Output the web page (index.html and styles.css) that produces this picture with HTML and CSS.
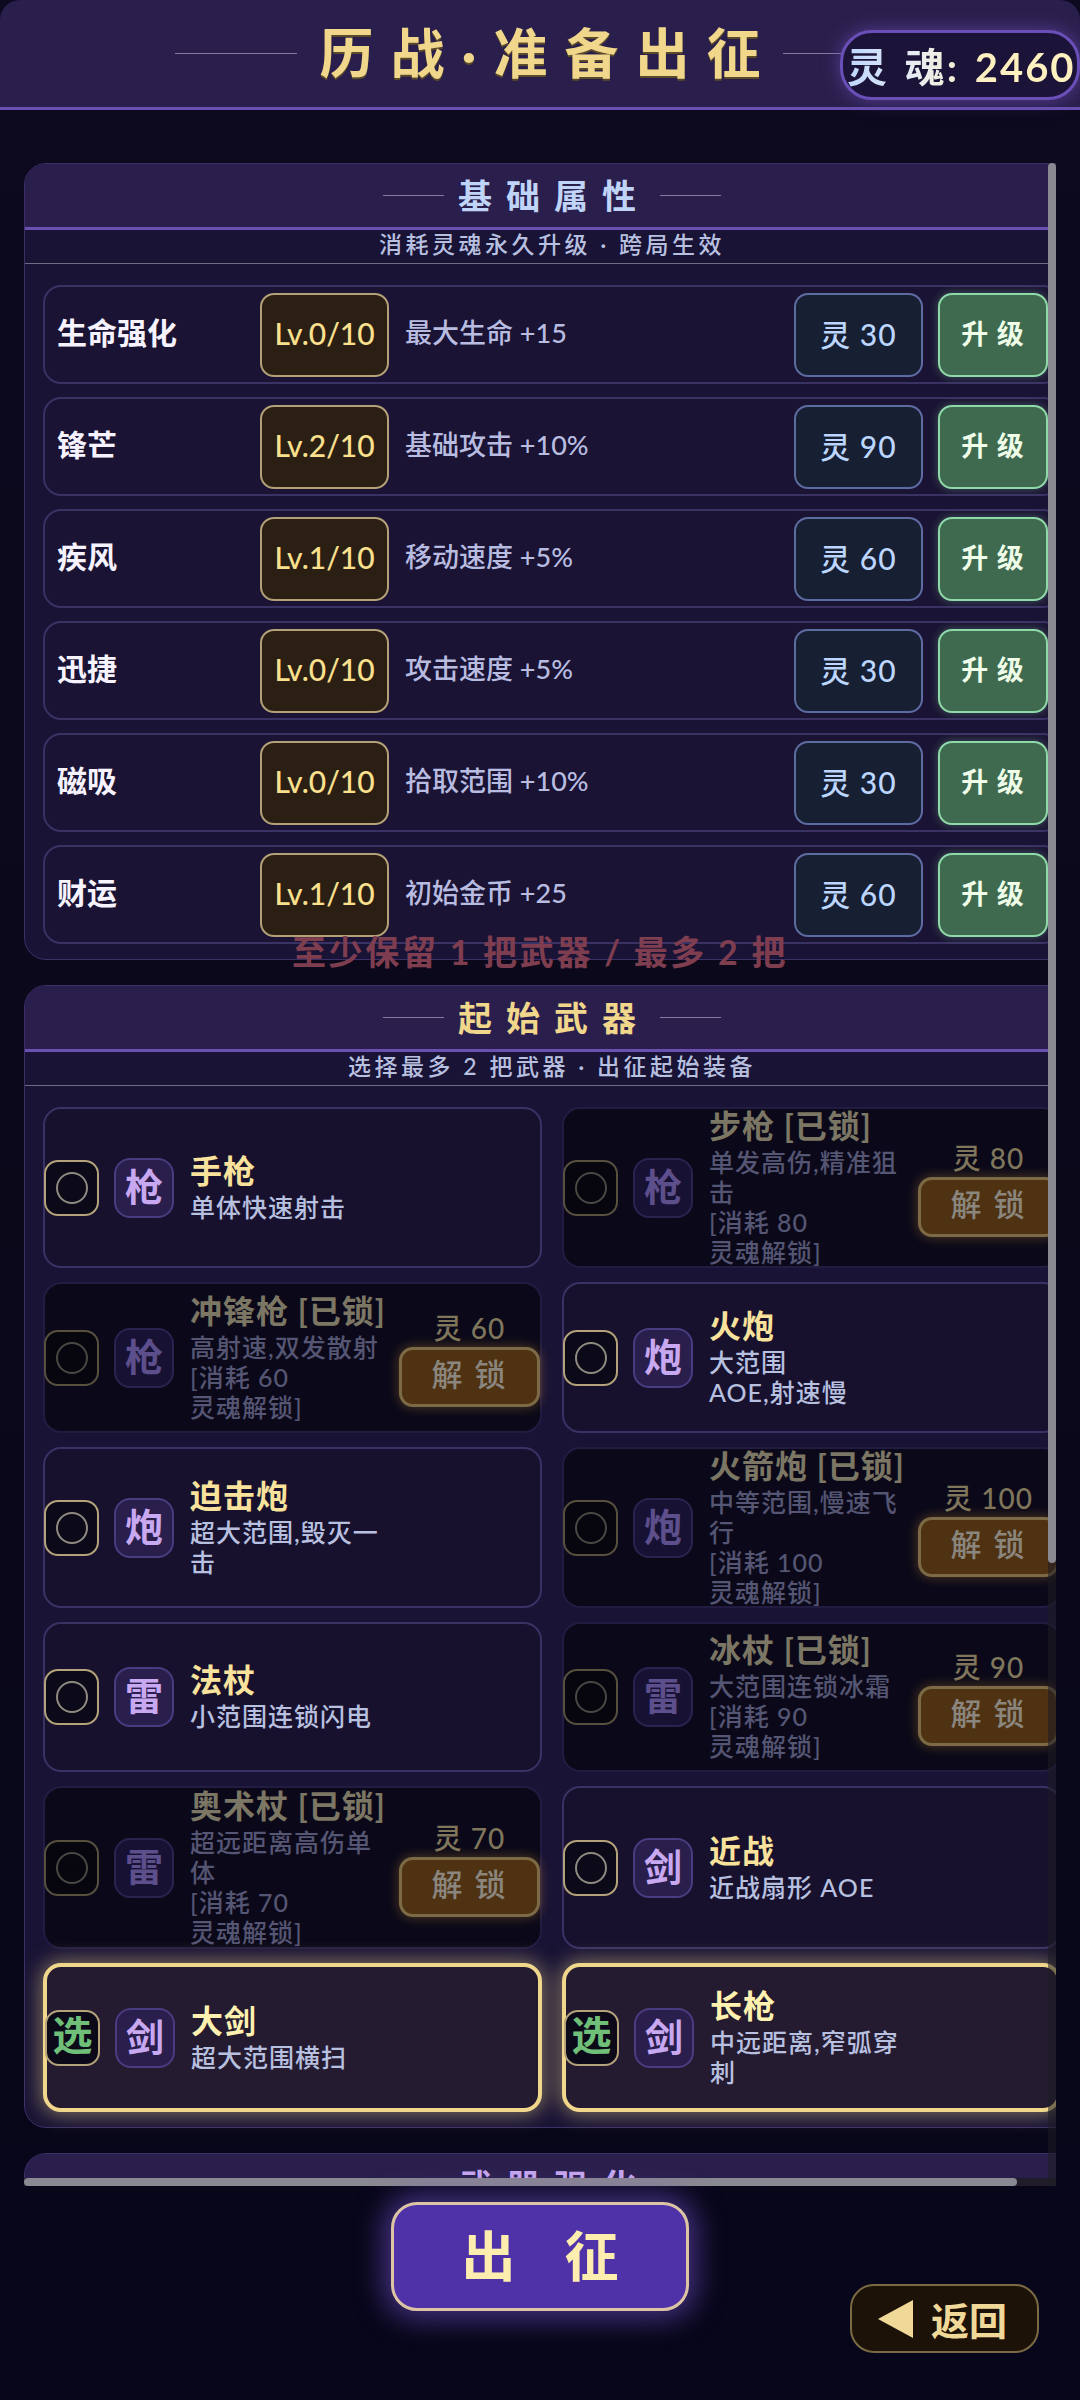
FILE: index.html
```html
<!DOCTYPE html>
<html lang="zh-CN">
<head>
<meta charset="utf-8">
<title>历战·准备出征</title>
<link rel="stylesheet" href="styles.css">
</head>
<body>
<div class="app">
  <header class="top">
    <span class="top-line"></span>
    <h1 class="top-title">历战·准备出征</h1>
    <span class="top-line"></span>
    <div class="soul"><span class="soul-text">灵 魂: 2460</span></div>
  </header>

  <div class="viewport">
    <div class="content">
      <section class="panel">
        <div class="panel-head"><span class="head-line"></span><h2 class="head-title blue">基础属性</h2><span class="head-line"></span></div>
        <p class="panel-sub">消耗灵魂永久升级 · 跨局生效</p>
        <div class="rows">
          <div class="row"><span class="row-name">生命强化</span><span class="row-lv">Lv.0/10</span><span class="row-desc">最大生命 +15</span><span class="row-cost">灵 30</span><span class="row-up">升 级</span></div>
          <div class="row"><span class="row-name">锋芒</span><span class="row-lv">Lv.2/10</span><span class="row-desc">基础攻击 +10%</span><span class="row-cost">灵 90</span><span class="row-up">升 级</span></div>
          <div class="row"><span class="row-name">疾风</span><span class="row-lv">Lv.1/10</span><span class="row-desc">移动速度 +5%</span><span class="row-cost">灵 60</span><span class="row-up">升 级</span></div>
          <div class="row"><span class="row-name">迅捷</span><span class="row-lv">Lv.0/10</span><span class="row-desc">攻击速度 +5%</span><span class="row-cost">灵 30</span><span class="row-up">升 级</span></div>
          <div class="row"><span class="row-name">磁吸</span><span class="row-lv">Lv.0/10</span><span class="row-desc">拾取范围 +10%</span><span class="row-cost">灵 30</span><span class="row-up">升 级</span></div>
          <div class="row"><span class="row-name">财运</span><span class="row-lv">Lv.1/10</span><span class="row-desc">初始金币 +25</span><span class="row-cost">灵 60</span><span class="row-up">升 级</span></div>
        </div>
      </section>

      <p class="warn">至少保留 1 把武器 / 最多 2 把</p>

      <section class="panel">
        <div class="panel-head"><span class="head-line"></span><h2 class="head-title gold">起始武器</h2><span class="head-line"></span></div>
        <p class="panel-sub">选择最多 2 把武器 · 出征起始装备</p>
        <div class="weapons">
          <div class="card"><span class="check"><span class="ring"></span></span><span class="icon">枪</span><div class="info"><div class="name">手枪</div><div class="desc">单体快速射击</div></div></div>
          <div class="card locked"><span class="check"><span class="ring"></span></span><span class="icon">枪</span><div class="info"><div class="name">步枪 [已锁]</div><div class="desc">单发高伤,精准狙击<br>[消耗 80<br>灵魂解锁]</div></div><div class="unlock"><span class="price">灵 80</span><span class="unlock-btn">解 锁</span></div></div>

          <div class="card locked"><span class="check"><span class="ring"></span></span><span class="icon">枪</span><div class="info"><div class="name">冲锋枪 [已锁]</div><div class="desc">高射速,双发散射<br>[消耗 60<br>灵魂解锁]</div></div><div class="unlock"><span class="price">灵 60</span><span class="unlock-btn">解 锁</span></div></div>
          <div class="card"><span class="check"><span class="ring"></span></span><span class="icon">炮</span><div class="info"><div class="name">火炮</div><div class="desc">大范围<br>AOE,射速慢</div></div></div>

          <div class="card"><span class="check"><span class="ring"></span></span><span class="icon">炮</span><div class="info"><div class="name">迫击炮</div><div class="desc">超大范围,毁灭一击</div></div></div>
          <div class="card locked"><span class="check"><span class="ring"></span></span><span class="icon">炮</span><div class="info"><div class="name">火箭炮 [已锁]</div><div class="desc">中等范围,慢速飞行<br>[消耗 100<br>灵魂解锁]</div></div><div class="unlock"><span class="price">灵 100</span><span class="unlock-btn">解 锁</span></div></div>

          <div class="card"><span class="check"><span class="ring"></span></span><span class="icon">雷</span><div class="info"><div class="name">法杖</div><div class="desc">小范围连锁闪电</div></div></div>
          <div class="card locked"><span class="check"><span class="ring"></span></span><span class="icon">雷</span><div class="info"><div class="name">冰杖 [已锁]</div><div class="desc">大范围连锁冰霜<br>[消耗 90<br>灵魂解锁]</div></div><div class="unlock"><span class="price">灵 90</span><span class="unlock-btn">解 锁</span></div></div>

          <div class="card locked"><span class="check"><span class="ring"></span></span><span class="icon">雷</span><div class="info"><div class="name">奥术杖 [已锁]</div><div class="desc">超远距离高伤单体<br>[消耗 70<br>灵魂解锁]</div></div><div class="unlock"><span class="price">灵 70</span><span class="unlock-btn">解 锁</span></div></div>
          <div class="card"><span class="check"><span class="ring"></span></span><span class="icon">剑</span><div class="info"><div class="name">近战</div><div class="desc">近战扇形 AOE</div></div></div>

          <div class="card selected"><span class="check on">选</span><span class="icon">剑</span><div class="info"><div class="name">大剑</div><div class="desc">超大范围横扫</div></div></div>
          <div class="card selected"><span class="check on">选</span><span class="icon">剑</span><div class="info"><div class="name">长枪</div><div class="desc">中远距离,窄弧穿刺</div></div></div>
        </div>
      </section>

      <section class="panel panel-last">
        <div class="panel-head"><span class="head-line"></span><h2 class="head-title purple">武器强化</h2><span class="head-line"></span></div>
      </section>
    </div>
    <div class="vtrack"><div class="vthumb"></div></div>
    <div class="htrack"><div class="hthumb"></div></div>
  </div>

  <footer class="foot">
    <button class="go">出 征</button>
    <button class="back"><span class="back-arrow"></span>返回</button>
  </footer>
</div>
</body>
</html>
```
FILE: styles.css
```css
* { box-sizing: border-box; }
html, body { margin: 0; padding: 0; }
body {
  width: 1080px;
  height: 2400px;
  overflow: hidden;
  background: linear-gradient(180deg, #0d0a20 0%, #0a0819 50%, #07061a 100%);
  font-family: "Lato", "Noto Sans CJK SC", sans-serif;
  color: #fff;
}
.app { width: 1080px; height: 2400px; position: relative; }

/* header */
.top {
  height: 110px;
  background: #2a1f4c;
  border-bottom: 3px solid #6a50b0;
  border-radius: 20px 20px 0 0;
  display: flex;
  align-items: center;
  justify-content: center;
  gap: 23px;
  position: relative;
}
.top-line { width: 122px; height: 1px; background: #85799f; }
.top-title {
  margin: 0 -17px 0 0;
  font-size: 54px;
  font-weight: 700;
  letter-spacing: 17px;
  line-height: 70px;
  color: #f0d78c;
  text-shadow: 0 2px 0 #5a4a2a;
}
.soul {
  position: absolute;
  right: 0;
  top: 30px;
  width: 240px;
  height: 70px;
  border: 3px solid #6a4fb8;
  border-radius: 32px;
  background: #1c1438;
  box-shadow: 0 0 18px rgba(106, 79, 184, .65);
  display: flex;
  align-items: center;
  padding-left: 4px;
  overflow: visible;
  white-space: nowrap;
}
.soul-text {
  font-size: 40px;
  font-weight: 700;
  letter-spacing: 2px;
  word-spacing: 4px;
  background: linear-gradient(90deg, #bdd6ff 0%, #e8ecf2 30%, #fff0c0 60%);
  -webkit-background-clip: text;
  background-clip: text;
  color: transparent;
}

/* scroll area */
.viewport {
  position: relative;
  margin: 53px 24px 0;
  width: 1032px;
  height: 2023px;
  overflow: hidden;
}
.content { width: 1056px; }
.panel {
  background: #191335;
  border: 1px solid #3c3068;
  border-radius: 22px;
  overflow: visible;
}
.panel-last { height: 200px; margin-top: 25px; border-bottom: 0; }
.panel-head {
  height: 66px;
  background: #2a1f4c;
  border-bottom: 3px solid #6a50b0;
  border-radius: 21px 21px 0 0;
  display: flex;
  align-items: center;
  justify-content: center;
  gap: 10px;
}
.head-line { width: 61px; height: 1px; background: #85799f; }
.head-title {
  margin: 0;
  padding-left: 4px;
  font-size: 34px;
  font-weight: 700;
  letter-spacing: 14px;
  line-height: 44px;
}
.blue { color: #c0d4f8; }
.gold { color: #f0d78c; }
.purple { color: #c8a8f0; }
.panel-sub {
  margin: 0;
  height: 34px;
  border-bottom: 1px solid #6e6a84;
  text-align: center;
  font-size: 23px;
  font-weight: 500;
  line-height: 28px;
  letter-spacing: 3.5px;
  color: #b8c0e0;
}

/* attribute rows */
.rows {
  padding: 21px 18px 15px;
  display: flex;
  flex-direction: column;
  gap: 13px;
}
.row {
  height: 99px;
  background: #1a1333;
  border: 2px solid #3a3164;
  border-radius: 18px;
  display: flex;
  align-items: center;
  padding: 0 11px 0 12px;
}
.row-name {
  width: 203px;
  padding-bottom: 7px;
  font-size: 30px;
  font-weight: 700;
  color: #f6f3ff;
}
.row-lv, .row-cost, .row-up {
  height: 84px;
  padding-bottom: 4px;
  border-radius: 14px;
  display: flex;
  align-items: center;
  justify-content: center;
  border: 2px solid;
}
.row-lv {
  width: 129px;
  background: #2b1f14;
  border-color: #b3a078;
  color: #fbe08e;
  font-size: 30px;
  font-weight: 500;
}
.row-desc {
  flex: 1;
  margin-left: 16px;
  padding-bottom: 7px;
  font-size: 27px;
  font-weight: 500;
  color: #b8bce0;
}
.row-cost {
  width: 129px;
  background: #171f33;
  border-color: #5c6ba0;
  color: #bcd6ff;
  font-size: 30px;
  font-weight: 500;
  letter-spacing: 1px;
}
.row-up {
  width: 110px;
  margin-left: 15px;
  background: #3f6a50;
  border-color: #8fd9a8;
  box-shadow: 0 0 10px rgba(143, 217, 168, .35);
  color: #eefce8;
  font-size: 27px;
  font-weight: 700;
  letter-spacing: 1px;
}

/* warning */
.warn {
  position: relative;
  width: 1032px;
  margin: -30px 0 11px;
  height: 44px;
  text-align: center;
  font-size: 34px;
  font-weight: 700;
  line-height: 44px;
  letter-spacing: 2.7px;
  color: #7f3d50;
}

/* weapons */
.weapons {
  display: grid;
  grid-template-columns: 499px 499px;
  grid-template-rows: 161px 151px 161px 150px 163px 149px;
  gap: 14px 20px;
  padding: 21px 18px 15px;
}
.card {
  background: #17112d;
  border: 2px solid #3a3164;
  border-radius: 18px;
  display: flex;
  align-items: center;
  min-width: 0;
}
.check {
  flex: none;
  width: 55px;
  height: 56px;
  margin-left: -1px;
  background: #0c0a18;
  border: 2px solid #b3a27a;
  border-radius: 14px;
  display: flex;
  align-items: center;
  justify-content: center;
}
.ring {
  width: 32px;
  height: 32px;
  border: 2px solid #8e8a80;
  border-radius: 50%;
}
.check.on {
  color: #6fbf78;
  font-size: 40px;
  font-weight: 700;
  line-height: 1;
  padding-bottom: 5px;
}
.icon {
  flex: none;
  width: 60px;
  height: 60px;
  margin-left: 15px;
  background: #2a1f4c;
  border: 2px solid #4a3c80;
  border-radius: 16px;
  color: #c8a8f0;
  font-size: 38px;
  font-weight: 700;
  line-height: 52px;
  text-align: center;
}
.info { flex: none; width: 204px; margin-left: 16px; padding-bottom: 2px; }
.name {
  font-size: 32px;
  font-weight: 700;
  line-height: 38px;
  letter-spacing: 1px;
  color: #f8e29c;
  white-space: nowrap;
}
.desc {
  margin-top: 2px;
  font-size: 25px;
  font-weight: 500;
  line-height: 30px;
  letter-spacing: 1px;
  color: #b8c0e0;
}
.unlock {
  flex: none;
  margin-left: auto;
  width: 141px;
  display: flex;
  flex-direction: column;
  align-items: center;
}
.price {
  font-size: 28px;
  font-weight: 500;
  line-height: 38px;
  letter-spacing: 1px;
  color: #7f765c;
}
.unlock-btn {
  width: 141px;
  height: 60px;
  background: #4f3212;
  border: 3px solid #7c6a46;
  border-radius: 14px;
  box-shadow: 0 0 12px rgba(200, 140, 50, .4);
  color: #8a867e;
  font-size: 31px;
  font-weight: 500;
  line-height: 48px;
  text-align: center;
  letter-spacing: 2px;
}
.card.locked {
  background: #0b0919;
  border-color: #221c42;
}
.locked .check { border-color: #57503f; background: #07060f; }
.locked .ring { border-color: #4a4842; }
.locked .icon { background: #171233; border-color: #2a2350; color: #5d4e8c; }
.locked .name { color: #7c7664; }
.locked .desc { color: #555574; }
.card.selected {
  background: #251b30;
  border: 4px solid #f0d78c;
  box-shadow: 0 0 20px 2px rgba(240, 215, 140, .5);
}
.selected .check { margin-left: -2px; }
.selected .name { color: #fff2b0; }

/* overlay scrollbars */
.vtrack {
  position: absolute;
  top: 0;
  right: 0;
  width: 8px;
  height: 100%;
  background: rgba(30, 28, 34, .55);
}
.vthumb { width: 8px; height: 1400px; background: #8a8890; border-radius: 4px; }
.htrack {
  position: absolute;
  left: 0;
  bottom: 0;
  width: 100%;
  height: 8px;
  background: rgba(30, 28, 34, .75);
}
.hthumb { width: 993px; height: 8px; background: #8a8890; border-radius: 4px; }

/* footer */
.foot {
  position: relative;
  padding-top: 16px;
  display: flex;
  justify-content: center;
}
.go {
  width: 298px;
  height: 109px;
  background: #5032a8;
  border: 3px solid #dcc4a4;
  border-radius: 26px;
  box-shadow: 0 0 28px 8px rgba(116, 84, 210, .55);
  color: #fdeeb0;
  font-family: inherit;
  font-size: 54px;
  font-weight: 700;
  letter-spacing: 18px;
  padding: 0 0 6px 18px;
}
.back {
  position: absolute;
  left: 850px;
  top: 98px;
  width: 189px;
  height: 69px;
  background: #1c1208;
  border: 2px solid #7a6a44;
  border-radius: 24px;
  color: #f0d898;
  font-family: inherit;
  font-size: 38px;
  font-weight: 700;
  display: flex;
  align-items: center;
  padding: 0 0 0 26px;
  gap: 18px;
}
.back-arrow {
  width: 0;
  height: 0;
  border-style: solid;
  border-width: 19px 35px 19px 0;
  border-color: transparent #f0d898 transparent transparent;
}
```
